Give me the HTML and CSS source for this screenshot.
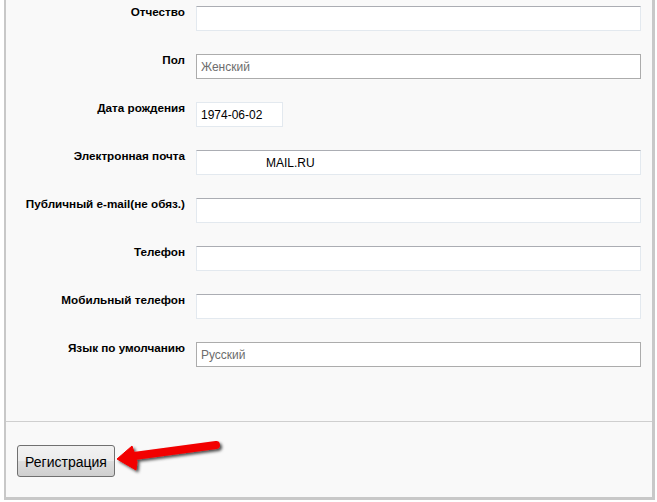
FILE: index.html
```html
<!DOCTYPE html>
<html lang="ru">
<head>
    <meta charset="UTF-8">
    <title>Регистрация</title>
    <link rel="stylesheet" href="styles.css">
</head>
<body>
    <div class="panel">
        <div class="fields">
            <div class="row">
                <label>Отчество</label>
                <div class="input"></div>
            </div>
            <div class="row">
                <label>Пол</label>
                <div class="input select placeholder">Женский</div>
            </div>
            <div class="row">
                <label>Дата рождения</label>
                <div class="input date">1974-06-02</div>
            </div>
            <div class="row">
                <label>Электронная почта</label>
                <div class="input"><span class="mail">MAIL.RU</span></div>
            </div>
            <div class="row">
                <label>Публичный e-mail(не обяз.)</label>
                <div class="input"></div>
            </div>
            <div class="row">
                <label>Телефон</label>
                <div class="input"></div>
            </div>
            <div class="row">
                <label>Мобильный телефон</label>
                <div class="input"></div>
            </div>
            <div class="row">
                <label>Язык по умолчанию</label>
                <div class="input select placeholder">Русский</div>
            </div>
        </div>
        <div class="actions">
            <button class="btn">Регистрация</button>
            <svg class="arrow" width="130" height="50" viewBox="0 0 130 50">
                <defs>
                    <filter id="sh" x="-20%" y="-40%" width="140%" height="180%">
                        <feDropShadow dx="2" dy="2" stdDeviation="1.5" flood-color="#000" flood-opacity="0.7"/>
                    </filter>
                </defs>
                <g filter="url(#sh)" fill="#f20000" stroke="#f20000">
                    <line x1="24" y1="24" x2="106" y2="13" stroke-width="8" stroke-linecap="round"/>
                    <polygon points="7,27 22,14 24,20 27,30 26,38" stroke-width="1" stroke-linejoin="round"/>
                </g>
            </svg>
        </div>
    </div>
</body>
</html>
```

FILE: styles.css
```css
body {
    margin: 0;
    background: #fff;
    font-family: Arial, "Liberation Sans", sans-serif;
}
.panel {
    margin-left: 4px;
    width: 646px;
    height: 497px;
    background: #f9f9f9;
    border-left: 2px solid #c8c8c8;
    border-right: 3px solid #c8c8c8;
    border-bottom: 3px solid #c8c8c8;
}
.fields {
    padding: 6px 11px 54px 0;
    border-bottom: 1px solid #cfcfcf;
}
.row {
    display: flex;
    align-items: flex-start;
    gap: 11px;
    height: 25px;
    margin-bottom: 23px;
}
.row:last-child { margin-bottom: 0; }
.row label {
    width: 179px;
    flex-shrink: 0;
    text-align: right;
    font-size: 11.7px;
    font-weight: bold;
    line-height: 14px;
    margin-top: -1px;
    color: #000;
}
.input {
    box-sizing: border-box;
    flex: 1;
    height: 25px;
    background: #fff;
    border: 1px solid #e3e9ef;
    border-top-color: #abadb3;
    padding: 1px 4px 0;
    font-size: 12px;
    line-height: 23px;
    color: #000;
}
.input.select {
    border: 1px solid #acacac;
}
.input.date {
    flex: none;
    width: 87px;
    border-color: #e3e9ef;
}
.placeholder { color: #6d6d6d; }
.mail { padding-left: 65px; }
.actions {
    position: relative;
    padding: 23px 0 0 11px;
}
.btn {
    height: 32px;
    width: 98px;
    padding: 1px 0 0;
    border: 1px solid #707070;
    border-radius: 3px;
    background: linear-gradient(#f2f2f2, #ebebeb 50%, #dddddd 51%, #cfcfcf);
    font-family: Arial, "Liberation Sans", sans-serif;
    font-size: 14px;
    color: #000;
}
.arrow {
    position: absolute;
    left: 104px;
    top: 10px;
}
```
